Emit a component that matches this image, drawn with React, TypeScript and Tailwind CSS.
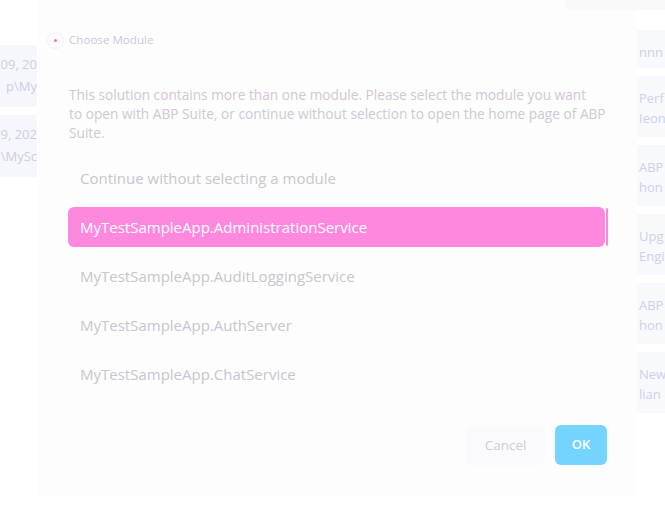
import React from "react";

const font = { fontFamily: '"Open Sans", "Liberation Sans", sans-serif' };

function LeftCard({ a, b }: { a: string; b: string }) {
  return (
    <div className="h-[62px] w-[37px] overflow-hidden bg-[#f6f7fc] pt-[8px] text-[13px] leading-[22px] text-[#cfcde0] whitespace-nowrap flex flex-col items-end">
      <div>{a}</div>
      <div>{b}</div>
    </div>
  );
}

function RightCard({ a, b, h }: { a: string; b?: string; h: string }) {
  return (
    <div className={`${h} w-[28px] overflow-hidden bg-[#f8f9fd] pl-[2px] pt-[12px] text-[13px] leading-[20px] text-[#cfd0e6] whitespace-nowrap`}>
      <div>{a}</div>
      {b && <div>{b}</div>}
    </div>
  );
}

export default function App() {
  const items = [
    "Continue without selecting a module",
    "MyTestSampleApp.AdministrationService",
    "MyTestSampleApp.AuditLoggingService",
    "MyTestSampleApp.AuthServer",
    "MyTestSampleApp.ChatService",
  ];
  return (
    <div className="relative h-[531px] w-[665px] overflow-hidden bg-white" style={font}>
      <div className="flex h-full">
        {/* left background column */}
        <div className="flex w-[38px] flex-col gap-[8px] pt-[45px]">
          <LeftCard a="09, 20" b="p\My" />
          <LeftCard a="09, 202" b="\MySc" />
        </div>

        {/* dialog */}
        <div className="flex h-[495px] w-[599px] flex-col bg-[#fdfdfd] pl-[31px] pr-[29px] pt-[30px]">
          <div className="-ml-[22px] flex items-center gap-[5px]">
            <div className="flex h-[17px] w-[17px] items-center justify-center rounded-full border border-[#f1f0fa] bg-[#fbfbfe]">
              <div className="h-[3px] w-[3px] rounded-full bg-[#f56fce]" />
            </div>
            <div className="text-[11.6px] leading-[20px] text-[#cfc6d8]">Choose Module</div>
          </div>

          <p className="-mr-[20px] mt-[35px] whitespace-nowrap text-[13.7px] leading-[19px] text-[#d2c7d6]">
            This solution contains more than one module. Please select the module you want
            <br />
            to open with ABP Suite, or continue without selection to open the home page of ABP
            <br />
            Suite.
          </p>

          <div className="mt-[16px] flex flex-col gap-[9px]">
            {items.map((t, i) =>
              i === 1 ? (
                <div key={t} className="-ml-[1px] flex items-center gap-[1px]">
                  <div className="flex h-[40px] w-[537px] items-center rounded-[6px] bg-[#ff88df] px-[12px] text-[15px] text-white">
                    {t}
                  </div>
                  <div className="h-[38px] w-[2px] rounded-full bg-[#ff88df]" />
                </div>
              ) : (
                <div key={t} className="flex h-[40px] items-center px-[11px] text-[15px] text-[#c8c6d0]">
                  {t}
                </div>
              )
            )}
          </div>

          <div className="mt-[31px] flex justify-end gap-[10px] pr-[1px]">
            <button className="h-[40px] w-[79px] rounded-[6px] bg-[#f9f9fe] text-[13.5px] text-[#d3c9d8]">
              Cancel
            </button>
            <button className="h-[40px] w-[52px] rounded-[6px] bg-[#74d3ff] text-[13px] font-semibold text-white">
              OK
            </button>
          </div>
        </div>

        {/* right background column */}
        <div className="flex w-[28px] flex-col gap-[8px] pt-[30px]">
          <RightCard h="h-[38px]" a="nnn" />
          <RightCard h="h-[61px]" a="Perf" b="Ieon" />
          <RightCard h="h-[61px]" a="ABP" b="hon" />
          <RightCard h="h-[61px]" a="Upg" b="Engi" />
          <RightCard h="h-[61px]" a="ABP" b="hon" />
          <RightCard h="h-[61px]" a="New" b="lian" />
        </div>
      </div>
      <div className="absolute right-0 top-0 h-[10px] w-[100px] rounded-bl-[6px] bg-[#f9f9fc]" />
    </div>
  );
}
